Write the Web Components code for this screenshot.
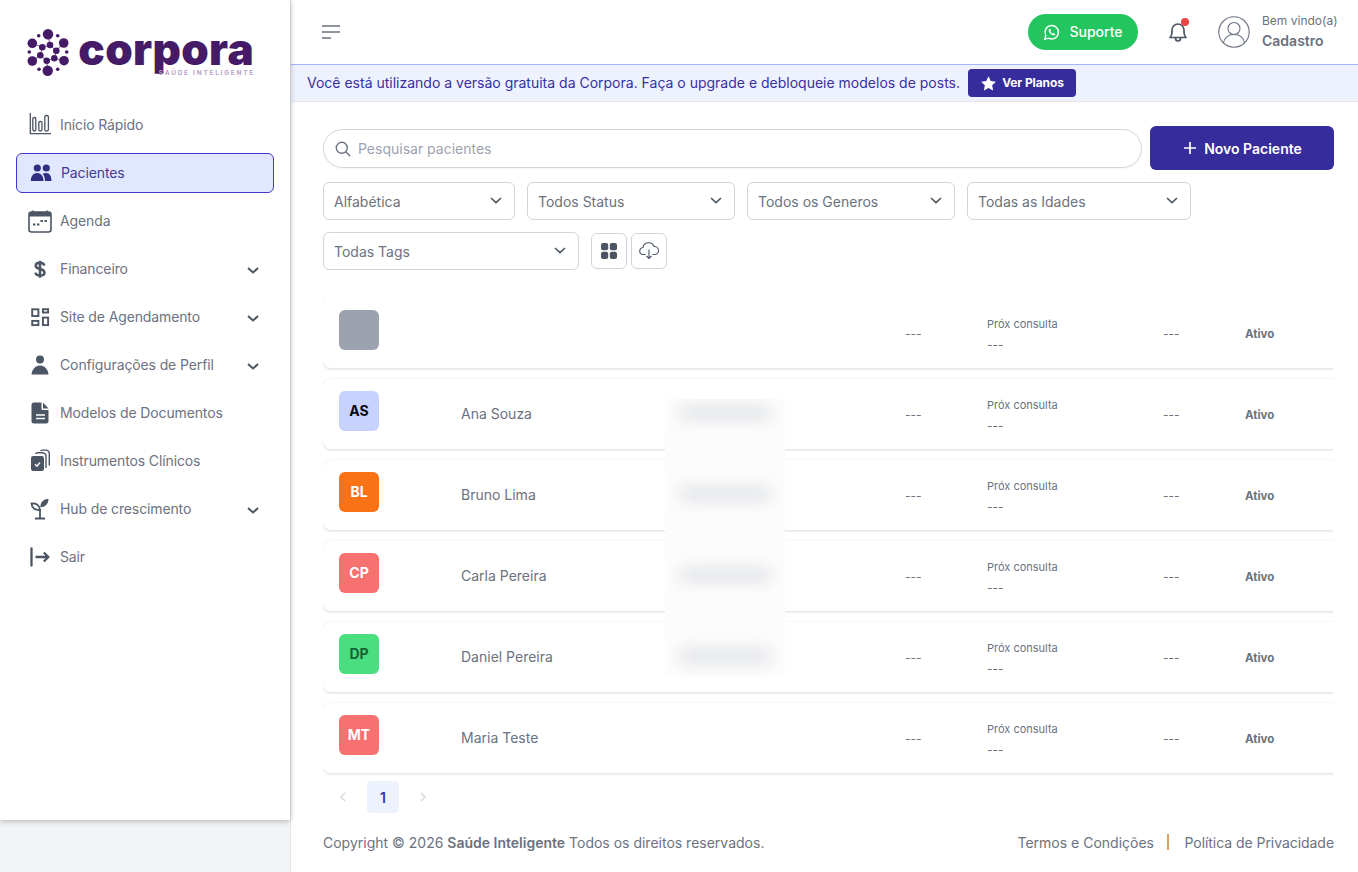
<!DOCTYPE html>
<html lang="pt-BR">
<head>
<meta charset="utf-8">
<title>Corpora - Pacientes</title>
<style>
  html, body { margin: 0; padding: 0; height: 100%; }
  body { background: #f3f4f6; font-family: Inter, "Liberation Sans", sans-serif; overflow: hidden; }
</style>
</head>
<body>
<app-shell>
  <side-bar slot="side">
    <nav-item icon="chart">Início Rápido</nav-item>
    <nav-item icon="people" active>Pacientes</nav-item>
    <nav-item icon="calendar">Agenda</nav-item>
    <nav-item icon="dollar" expandable>Financeiro</nav-item>
    <nav-item icon="site" expandable>Site de Agendamento</nav-item>
    <nav-item icon="person" expandable>Configurações de Perfil</nav-item>
    <nav-item icon="doc">Modelos de Documentos</nav-item>
    <nav-item icon="clip">Instrumentos Clínicos</nav-item>
    <nav-item icon="sprout" expandable>Hub de crescimento</nav-item>
    <nav-item icon="logout">Sair</nav-item>
  </side-bar>
  <top-bar></top-bar>
  <plan-banner>Você está utilizando a versão gratuita da Corpora. Faça o upgrade e debloqueie modelos de posts.</plan-banner>
  <patient-page>
    <patient-toolbar></patient-toolbar>
    <patient-list>
      <patient-row color="#9ca3af"></patient-row>
      <patient-row initials="AS" color="#c7d2fe" ink="#030712" name="Ana Souza"></patient-row>
      <patient-row initials="BL" color="#f97316" ink="#fff" name="Bruno Lima"></patient-row>
      <patient-row initials="CP" color="#f87171" ink="#fff" name="Carla Pereira"></patient-row>
      <patient-row initials="DP" color="#4ade80" ink="#166534" name="Daniel Pereira"></patient-row>
      <patient-row initials="MT" color="#f87171" ink="#fff" name="Maria Teste"></patient-row>
    </patient-list>
    <page-numbers></page-numbers>
    <page-footer></page-footer>
  </patient-page>
</app-shell>

<script>
const navIcons = {
  chart: `<path d="M2.300 0v20.700h20.700" fill="none" stroke="currentColor" stroke-width="1.300"/>
    <g fill="none" stroke="currentColor" stroke-width="1.300"><rect x="4.800" y="4.500" width="3" height="13.500" rx="1.400"/><rect x="10.800" y="8.500" width="3.200" height="9.500" rx="1.400"/><rect x="16.800" y="2.500" width="3.600" height="15.500" rx="1.500"/></g>`,
  people: `<g fill="currentColor"><circle cx="8.300" cy="7" r="3.600"/><circle cx="17.300" cy="7" r="3.600"/><path d="M1.800 20c0-5 2.600-8 6.300-8s6.400 3 6.400 8z"/><path d="M16 20c0-3-.7-5.600-2.400-7.300 1-.5 2.200-.7 3.400-.7 3.600 0 5.500 3 5.500 8z"/></g>`,
  calendar: `<rect x="1" y="3" width="22" height="20" rx="2.500" fill="none" stroke="currentColor" stroke-width="1.600"/><path d="M1 5.500a2.500 2.500 0 0 1 2.500-2.500h17a2.500 2.500 0 0 1 2.500 2.500v2h-22z" fill="currentColor"/><path d="M5 1.500v2M19 1.500v2" stroke="currentColor" stroke-width="1.600"/><g fill="currentColor"><rect x="5" y="14.500" width="2.400" height="2"/><rect x="9" y="14.500" width="2.400" height="2"/><rect x="12.500" y="11" width="2.400" height="2"/><rect x="16.500" y="11" width="2.400" height="2"/></g>`,
  dollar: `<path d="M16.300 8.600c-.3-1.700-2-2.800-4.300-2.800-2.600 0-4.300 1.200-4.300 3 0 4.300 8.800 2.200 8.800 6.700 0 1.800-1.900 3.100-4.500 3.100-2.500 0-4.200-1.200-4.500-3M12 3.700v17" fill="none" stroke="currentColor" stroke-width="2.500"/>`,
  site: `<g fill="none" stroke="currentColor" stroke-width="1.900"><rect x="4.200" y="4.300" width="6.200" height="6.700"/><rect x="14.900" y="4.200" width="5.200" height="3.300"/><rect x="4.200" y="15.900" width="6.200" height="4.200"/><rect x="14.900" y="12.600" width="5.200" height="7.500"/></g>`,
  person: `<g fill="currentColor"><circle cx="12" cy="6.500" r="4"/><path d="M3.500 21.500c.3-5 4-9 8.500-9s8.200 4 8.500 9z"/></g>`,
  doc: `<path d="M6 1.500h7.500v6a1.500 1.500 0 0 0 1.500 1.500h5.500v11a2.500 2.500 0 0 1-2.500 2.500h-12a2.500 2.500 0 0 1-2.500-2.500v-16a2.500 2.500 0 0 1 2.500-2.500zM15 1.500l5.500 6h-5.500z" fill="currentColor"/><path d="M8 14h9M8 17.500h9" stroke="#fff" stroke-width="1.400"/>`,
  clip: `<rect x="3" y="7" width="13" height="15" rx="2.200" fill="currentColor"/><path d="M7 15.300l2 2 3-3.800" fill="none" stroke="#fff" stroke-width="1.400"/><path d="M7.500 5c.4-.9 1.100-1.300 2-1.300h4.500c2 0 4 1.300 4 3.300v12" fill="none" stroke="currentColor" stroke-width="1.400"/><path d="M12.500 1.800c.7-.5 1.500-.7 2.500-.7h2.500c2.200 0 3.800 1.600 3.800 3.800v11.600" fill="none" stroke="currentColor" stroke-width="1.400"/>`,
  sprout: `<path d="M12 21v-9M7 21.500h10" fill="none" stroke="currentColor" stroke-width="1.800"/><path d="M3.500 6.500c4.700-.3 8.200 1.500 8.500 6.500-4.500.3-8.200-1.500-8.500-6.500z" fill="none" stroke="currentColor" stroke-width="1.800"/><path d="M20.500 2c-4.500 0-8 2.500-8.200 8.200 4.800 0 8-3 8.200-8.200z" fill="currentColor"/>`,
  logout: `<path d="M3.500 3.500v17" stroke="currentColor" stroke-width="2.300" stroke-linecap="round"/><path d="M7.500 12h13M15.800 7.500l4.500 4.500-4.500 4.500" fill="none" stroke="currentColor" stroke-width="2.300"/>`
};

class AppShell extends HTMLElement {
  constructor() {
    super();
    this.attachShadow({ mode: 'open' }).innerHTML = `
      <style>
        :host { display: flex; height: 872px; align-items: flex-start; }
        .main { flex: 1; min-width: 0; height: 872px; background: #fff; border-left: 1px solid #e5e7eb; display: flex; flex-direction: column; }
        ::slotted(side-bar) { flex: none; }
      </style>
      <slot name="side"></slot>
      <div class="main"><slot></slot></div>`;
  }
}

class CorporaLogo extends HTMLElement {
  constructor() {
    super();
    const big = [[48,34.300,5.200],[63.700,43,4.800],[64,60.700,4.800],[47.700,70.700,5.200],[32.300,61,4.800],[32.300,43.300,4.800]];
    const mid = [[50,45,3.300],[56.300,50.700,3.300],[54.300,58.300,3.300],[46.700,60.700,3.300],[40.300,55.300,3.300],[42.300,47.300,3.300]];
    const small = [[38.700,35.700,1.800],[57.700,35.700,1.800],[66.700,52,1.800],[57.700,69.300,1.800],[39,69.300,1.800],[29.300,52,1.800]];
    const dots = [...big, ...mid, ...small].map(c => `<circle cx="${c[0] - 27}" cy="${c[1] - 29}" r="${c[2]}"/>`).join('');
    const links = big.map((b, i) => {
      const m = mid[i];
      const n = mid[(i + 1) % 6];
      return `<path d="M${b[0] - 27} ${b[1] - 29}L${m[0] - 27} ${m[1] - 29}L${n[0] - 27} ${n[1] - 29}"/>`;
    }).join('');
    this.attachShadow({ mode: 'open' }).innerHTML = `
      <style>
        :host { display: flex; align-items: flex-start; height: 101px; box-sizing: border-box; padding: 29px 0 0 27px; color: #451a66; }
        svg { flex: none; width: 44px; height: 48px; }
        .word { margin-left: 9px; display: flex; flex-direction: column; align-items: flex-end; width: 174px; }
        .name { display: block; font: 900 44px/44px Inter, sans-serif; letter-spacing: .35px; height: 41px; margin-top: -2px; white-space: nowrap; }
        .tag { font: 700 6.500px/8px Inter, sans-serif; letter-spacing: 1.750px; color: #b9a3c9; margin-top: 1px; margin-right: -1px; }
      </style>
      <svg viewBox="0 0 44 48" fill="currentColor"><g stroke="currentColor" stroke-width=".7" fill="none">${links}</g>${dots}</svg>
      <div class="word"><span class="name">corpora</span><span class="tag">SAÚDE INTELIGENTE</span></div>`;
  }
}
customElements.define('corpora-logo', CorporaLogo);

class SideBar extends HTMLElement {
  constructor() {
    super();
    this.attachShadow({ mode: 'open' }).innerHTML = `
      <style>
        :host { display: flex; flex-direction: column; width: 290px; height: 820px; background: #fff; box-shadow: 0 1px 6px rgba(0,0,0,.28); position: relative; }
      </style>
      <corpora-logo></corpora-logo>
      <slot></slot>`;
  }
}

class NavItem extends HTMLElement {
  constructor() {
    super();
    const root = this.attachShadow({ mode: 'open' });
    const active = this.hasAttribute('active');
    root.innerHTML = `
      <style>
        :host { display: block; height: 40px; margin: 4px 16px; }
        .item { height: 100%; box-sizing: border-box; display: flex; align-items: center; padding: 0 12px; border-radius: 6px; color: #6b7280; font-size: 14px; letter-spacing: -.12px; }
        .item.active { background: #e0e7ff; border: 1px solid #4338ca; color: #3f3d94; }
        .icon { width: 24px; height: 24px; margin-right: 8px; flex: none; color: #4b5563; }
        .active .icon { color: #312e81; }
        .label { flex: 1; padding-bottom: 2px; }
        .chev { width: 16px; height: 16px; flex: none; margin: 2px 1px 0 0; }
      </style>
      <div class="item ${active ? 'active' : ''}">
        <svg class="icon" viewBox="0 0 24 24">${navIcons[this.getAttribute('icon')] || ''}</svg>
        <span class="label"><slot></slot></span>
        ${this.hasAttribute('expandable') ? '<svg class="chev" viewBox="0 0 16 16"><path d="M3 6l5 4.500 5-4.500" fill="none" stroke="#4b5563" stroke-width="2"/></svg>' : ''}
      </div>`;
  }
}

class TopBar extends HTMLElement {
  constructor() {
    super();
    this.attachShadow({ mode: 'open' }).innerHTML = `
      <style>
        :host { display: flex; align-items: center; flex: none; height: 64px; box-sizing: content-box; border-bottom: 1px solid #a5b4fc; padding: 0 20px 0 31px; background: #fff; }
        .menu { width: 18px; height: 14px; }
        .spacer { flex: 1; }
        .support { display: flex; align-items: center; justify-content: center; gap: 9px; width: 110px; height: 36px; border-radius: 18px; background: #22c55e; color: #fff; font-size: 14px; font-weight: 500; }
        .support span { padding-bottom: 2px; }
        .bell { position: relative; width: 24px; height: 24px; margin-left: 28px; }
        .bell svg { display: block; }
        .dot { position: absolute; top: -2px; right: 1px; width: 8px; height: 8px; border-radius: 50%; background: #ef4444; }
        .avatar { width: 32px; height: 32px; margin-left: 28px; }
        .who { margin-left: 12px; width: 76px; display: flex; flex-direction: column; gap: 2px; color: #6b7280; }
        .who span { font-size: 12px; line-height: 16px; white-space: nowrap; }
        .who b { font-size: 14px; line-height: 20px; font-weight: 600; }
      </style>
      <svg class="menu" viewBox="0 0 18 14"><path d="M0 1h18M0 7h18M0 13h9" stroke="#6b7280" stroke-width="1.500"/></svg>
      <div class="spacer"></div>
      <div class="support">
        <svg width="17" height="17" viewBox="0 0 24 24" fill="none" stroke="#fff" stroke-width="2"><path d="M2.500 21.500l1.500-5.200a9.500 9.500 0 1 1 3.700 3.700z"/><path d="M8.500 8c0-.6.800-1.200 1.300-1 .4.200 1.200 2 1.200 2.300 0 .5-.8 1-.8 1.400.400 1.300 2 2.800 3.300 3.200.4 0 .9-.9 1.400-.9.300 0 2 .9 2.200 1.200.2.500-.5 1.300-1 1.400-3.500 1-8.500-4-7.600-7.600z" fill="#fff" stroke-width=".6"/></svg>
        <span>Suporte</span>
      </div>
      <div class="bell">
        <svg width="24" height="24" viewBox="0 0 24 24" fill="none" stroke="#4b5563" stroke-width="1.700"><path d="M4 17.500c1.500-1.500 2-2.500 2-5.500v-2a6 6 0 0 1 12 0v2c0 3 .5 4 2 5.500z" stroke-linejoin="round"/><path d="M9.500 18c0 1.800 1 3 2.500 3s2.500-1.200 2.500-3"/></svg>
        <div class="dot"></div>
      </div>
      <svg class="avatar" viewBox="0 0 32 32" fill="none" stroke="#6b7280" stroke-width="1.100"><circle cx="16" cy="16" r="15.200"/><circle cx="16" cy="12.500" r="6"/><path d="M5.500 27c1-5.500 5.200-8.500 10.500-8.500s9.500 3 10.500 8.500"/></svg>
      <div class="who"><span>Bem vindo(a)</span><b>Cadastro</b></div>`;
  }
}

class PlanBanner extends HTMLElement {
  constructor() {
    super();
    this.attachShadow({ mode: 'open' }).innerHTML = `
      <style>
        :host { display: flex; align-items: center; flex: none; height: 36px; padding-left: 16px; background: #eef2ff; border-bottom: 1px solid #e5e7eb; color: #3730a3; font-size: 14px; }
        .msg { padding-bottom: 2px; }
        .up { display: flex; align-items: center; justify-content: center; gap: 5px; width: 108px; height: 28px; margin-left: 8px; border-radius: 4px; background: #372c9b; color: #fff; font-size: 12px; font-weight: 700; letter-spacing: -.1px; }
        .up span { padding-bottom: 2px; }
      </style>
      <span class="msg"><slot></slot></span>
      <div class="up"><svg width="17" height="17" viewBox="0 0 24 24" fill="#fff"><path d="M12 1.800l3.200 6.700 7.300 1-5.300 5.100 1.300 7.300-6.500-3.500-6.500 3.500 1.300-7.300-5.300-5.100 7.300-1z"/></svg><span>Ver Planos</span></div>`;
  }
}

class PatientPage extends HTMLElement {
  constructor() {
    super();
    this.attachShadow({ mode: 'open' }).innerHTML = `
      <style>
        :host { display: flex; flex-direction: column; flex: 1; min-height: 0; padding: 24px 24px 0 32px; }
      </style>
      <slot></slot>`;
  }
}

class FilterSelect extends HTMLElement {
  constructor() {
    super();
    this.attachShadow({ mode: 'open' }).innerHTML = `
      <style>
        :host { display: flex; align-items: center; justify-content: space-between; box-sizing: border-box; height: 38px; padding: 1px 11px 0 10px; border: 1px solid #d1d5db; border-radius: 6px; color: #6b7280; font-size: 14px; background: #fff; }
        svg { width: 14px; height: 14px; flex: none; margin-top: -3px; }
      </style>
      <slot></slot>
      <svg viewBox="0 0 14 14"><path d="M2 5l5 4.600 5-4.600" fill="none" stroke="#4b5563" stroke-width="1.600"/></svg>`;
  }
}

class PatientToolbar extends HTMLElement {
  constructor() {
    super();
    this.attachShadow({ mode: 'open' }).innerHTML = `
      <style>
        :host { display: block; flex: none; }
        .top { display: flex; align-items: center; gap: 8px; height: 44px; }
        .search { flex: 1; height: 39px; box-sizing: border-box; margin-top: 1px; border: 1px solid #d1d5db; border-radius: 20px; display: flex; align-items: center; padding-left: 11px; gap: 7px; color: #9ca3af; font-size: 14px; box-shadow: 0 1px 2px rgba(0,0,0,.04); }
        .new { display: flex; align-items: center; justify-content: center; gap: 6px; width: 184px; height: 44px; border-radius: 6px; background: #372c9b; color: #fff; font-size: 14px; font-weight: 600; }
        .filters { display: flex; flex-wrap: wrap; gap: 12px; width: 880px; margin-top: 12px; align-items: center; }
        .views { display: flex; gap: 4px; }
        .vbtn { width: 36px; height: 36px; box-sizing: border-box; border: 1px solid #d1d5db; border-radius: 6px; display: flex; align-items: center; justify-content: center; }
      </style>
      <div class="top">
        <div class="search">
          <svg width="16" height="16" viewBox="0 0 16 16" fill="none" stroke="#6b7280" stroke-width="1.400"><circle cx="6.800" cy="6.800" r="5.500"/><path d="M10.800 10.800l4.400 4.400"/></svg>
          <span>Pesquisar pacientes</span>
        </div>
        <div class="new"><svg width="16" height="16" viewBox="0 0 16 16"><path d="M8 2v12M2 8h12" stroke="#fff" stroke-width="1.700"/></svg>Novo Paciente</div>
      </div>
      <div class="filters">
        <filter-select style="width:192px">Alfabética</filter-select>
        <filter-select style="width:208px">Todos Status</filter-select>
        <filter-select style="width:208px">Todos os Generos</filter-select>
        <filter-select style="width:224px">Todas as Idades</filter-select>
        <filter-select style="width:256px">Todas Tags</filter-select>
        <div class="views">
          <div class="vbtn"><svg width="16" height="16" viewBox="0 0 16 16" fill="#4b5563"><rect x="0" y="0" width="7.200" height="7.200" rx="2"/><rect x="8.800" y="0" width="7.200" height="7.200" rx="2"/><rect x="0" y="8.800" width="7.200" height="7.200" rx="2"/><rect x="8.800" y="8.800" width="7.200" height="7.200" rx="2"/></svg></div>
          <div class="vbtn"><svg width="20" height="18" viewBox="0 0 20 18" fill="none" stroke="#4b5563" stroke-width="1.100"><path d="M6.500 12.500h-2a3.500 3.500 0 0 1-.5-7 5.700 5.700 0 0 1 11-1 4 4 0 0 1 1 8h-2.500"/><path d="M10 7.500v9M7.500 14l2.500 2.500 2.500-2.500"/></svg></div>
        </div>
      </div>`;
  }
}

class PatientList extends HTMLElement {
  constructor() {
    super();
    const rows = [0, 1, 2, 3].map(() => '<div class="slot"><div class="smear"></div></div>').join('');
    this.attachShadow({ mode: 'open' }).innerHTML = `
      <style>
        :host { display: flex; flex-direction: column; gap: 11px; flex: none; margin-top: 28px; position: relative; overflow: hidden; padding-bottom: 4px; }
        .privacy { position: absolute; left: 342px; top: 101px; width: 120px; height: 277px; background: #fcfcfc; overflow: hidden; display: flex; flex-direction: column; }
        .slot { height: 81px; flex: none; display: flex; justify-content: center; padding-top: 8px; box-sizing: border-box; }
        .smear { width: 90px; height: 12px; background: #dddfe3; filter: blur(8px); }
      </style>
      <slot></slot>
      <div class="privacy">${rows}</div>`;
  }
}

class PatientRow extends HTMLElement {
  constructor() {
    super();
    const a = n => this.getAttribute(n) || '';
    this.attachShadow({ mode: 'open' }).innerHTML = `
      <style>
        :host { display: grid; grid-template-columns: 122px 204px 240px 82px 176px 82px 1fr; align-items: center; height: 70px; padding-left: 16px; background: #fff; border-radius: 8px 0 0 8px; box-shadow: 0 1px 3px rgba(0,0,0,.15), 0 -1px 2px rgba(0,0,0,.015); color: #6b7280; font-size: 14px; }
        .avatar { width: 40px; height: 40px; box-sizing: border-box; padding-bottom: 2px; border-radius: 6px; margin-top: -6px; display: flex; align-items: center; justify-content: center; font-weight: 700; font-size: 14px; }
        .name { padding-bottom: 2px; }
        .dash { font-size: 12px; color: #6b7280; }
        .next { display: flex; flex-direction: column; gap: 6px; font-size: 11px; line-height: 14px; margin-top: 4px; }
        .next .dash { line-height: 16px; }
        .status { font-size: 11.500px; font-weight: 700; margin-top: 2px; }
      </style>
      <div class="avatar" style="background:${a('color')};color:${a('ink')}">${a('initials')}</div>
      <div class="name">${a('name')}</div>
      <div></div>
      <div class="dash">---</div>
      <div class="next"><span>Próx consulta</span><span class="dash">---</span></div>
      <div class="dash">---</div>
      <div class="status">Ativo</div>`;
  }
}

class PageNumbers extends HTMLElement {
  constructor() {
    super();
    this.attachShadow({ mode: 'open' }).innerHTML = `
      <style>
        :host { display: flex; gap: 8px; flex: none; margin-top: 4px; padding-left: 4px; }
        div { width: 32px; height: 32px; display: flex; align-items: center; justify-content: center; border-radius: 4px; }
        .on { background: #eef2ff; color: #3730a3; font-size: 14px; font-weight: 600; }
      </style>
      <div><svg width="8" height="10" viewBox="0 0 8 10"><path d="M6 1L2 5l4 4" fill="none" stroke="#d1d5db" stroke-width="1.300"/></svg></div>
      <div class="on">1</div>
      <div><svg width="8" height="10" viewBox="0 0 8 10"><path d="M2 1l4 4-4 4" fill="none" stroke="#d1d5db" stroke-width="1.300"/></svg></div>`;
  }
}

class PageFooter extends HTMLElement {
  constructor() {
    super();
    this.attachShadow({ mode: 'open' }).innerHTML = `
      <style>
        :host { display: flex; justify-content: space-between; align-items: center; flex: none; height: 20px; margin-top: 19px; color: #6b7280; font-size: 14px; }
        b { font-weight: 600; }
        .links { display: flex; align-items: center; }
        .links span:last-child { display: block; width: 151px; text-align: right; white-space: nowrap; letter-spacing: -.05px; }
        .sep { width: 2px; height: 16px; background: #e0a060; margin: 0 14px 0 13px; flex: none; }
      </style>
      <div>Copyright © 2026 <b>Saúde Inteligente</b> Todos os direitos reservados.</div>
      <div class="links"><span>Termos e Condições</span><span class="sep"></span><span>Política de Privacidade</span></div>`;
  }
}

customElements.define('app-shell', AppShell);
customElements.define('side-bar', SideBar);
customElements.define('nav-item', NavItem);
customElements.define('top-bar', TopBar);
customElements.define('plan-banner', PlanBanner);
customElements.define('patient-page', PatientPage);
customElements.define('filter-select', FilterSelect);
customElements.define('patient-toolbar', PatientToolbar);
customElements.define('patient-list', PatientList);
customElements.define('patient-row', PatientRow);
customElements.define('page-numbers', PageNumbers);
customElements.define('page-footer', PageFooter);
</script>
</body>
</html>
